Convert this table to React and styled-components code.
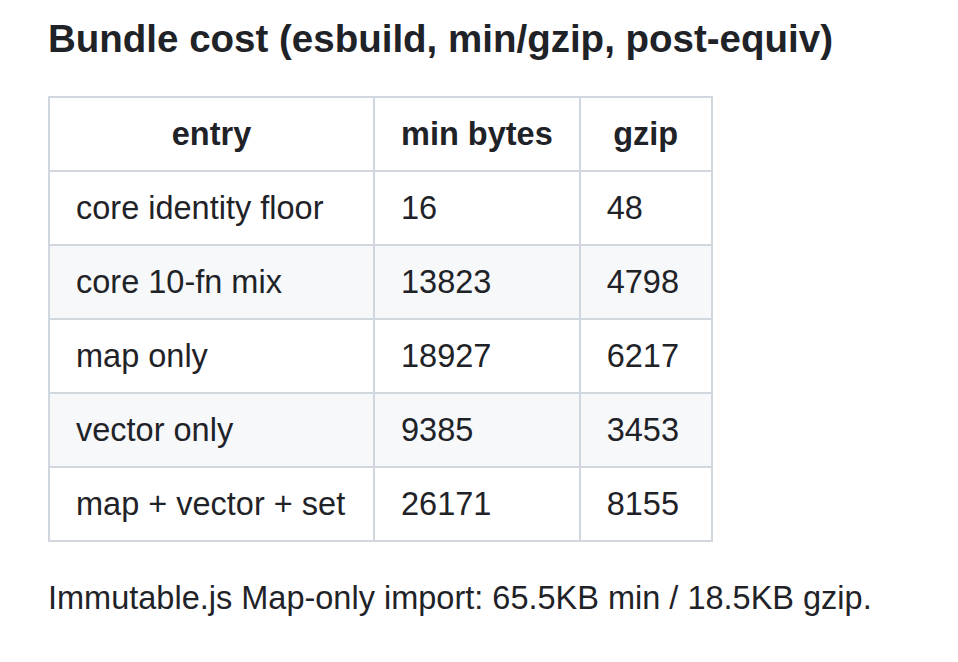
import styled, { createGlobalStyle } from "styled-components";

const GlobalStyle = createGlobalStyle`
  body {
    margin: 0;
    background: #ffffff;
  }
`;

const Markdown = styled.div`
  box-sizing: border-box;
  padding: 14px 48px;
  font-family: "Liberation Sans", Arial, sans-serif;
  font-size: 32.5px;
  line-height: 48px;
  color: #1f2328;
`;

const Heading = styled.h3`
  margin: 0 0 32px;
  font-size: 38.5px;
  font-weight: 600;
  line-height: 50px;
`;

const Table = styled.table`
  border-collapse: collapse;
  border-spacing: 0;
  margin: 0 0 32px;

  tr {
    background: #ffffff;
    border-top: 2px solid #d8dee4;
  }

  tbody tr:nth-child(2n) {
    background: #f6f8fa;
  }
`;

const Th = styled.th`
  padding: 12px 26px;
  border: 2px solid #d0d7de;
  font-weight: 600;
  text-align: center;
  min-width: ${(p) => p.$min || "auto"};
`;

const Td = styled.td`
  padding: 12px 26px;
  border: 2px solid #d0d7de;
  text-align: left;
`;

const Paragraph = styled.p`
  margin: 0;
`;

const rows = [
  ["core identity floor", "16", "48"],
  ["core 10-fn mix", "13823", "4798"],
  ["map only", "18927", "6217"],
  ["vector only", "9385", "3453"],
  ["map + vector + set", "26171", "8155"],
];

export default function App() {
  return (
    <>
      <GlobalStyle />
      <Markdown>
        <Heading>Bundle cost (esbuild, min/gzip, post-equiv)</Heading>
        <Table>
          <thead>
            <tr>
              <Th $min="271px">entry</Th>
              <Th>min bytes</Th>
              <Th $min="78px">gzip</Th>
            </tr>
          </thead>
          <tbody>
            {rows.map((r) => (
              <tr key={r[0]}>
                <Td>{r[0]}</Td>
                <Td>{r[1]}</Td>
                <Td>{r[2]}</Td>
              </tr>
            ))}
          </tbody>
        </Table>
        <Paragraph>Immutable.js Map-only import: 65.5KB min / 18.5KB gzip.</Paragraph>
      </Markdown>
    </>
  );
}
